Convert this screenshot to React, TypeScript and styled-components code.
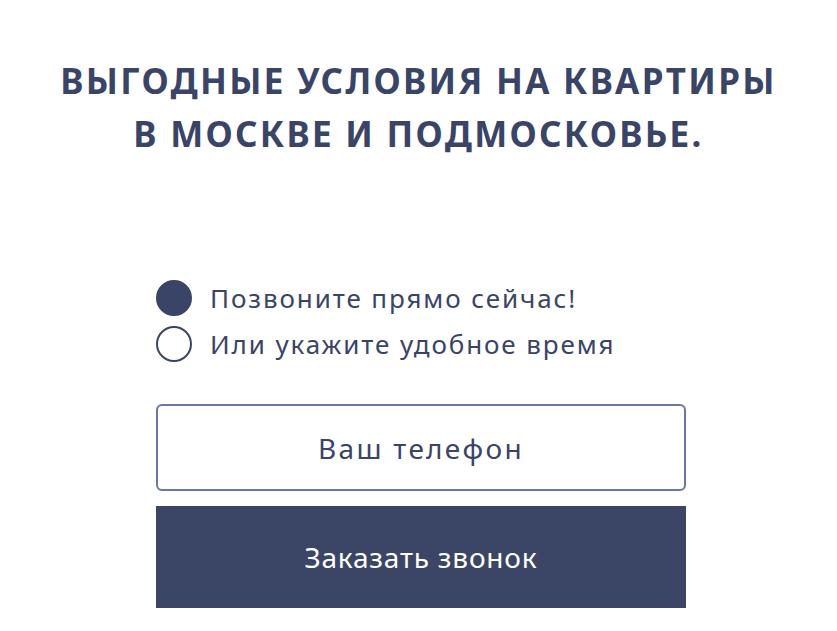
import React, { useState } from "react";
import styled, { createGlobalStyle } from "styled-components";

const Global = createGlobalStyle`
  html, body { margin: 0; padding: 0; background: #ffffff; }
  body { font-family: "Noto Sans", "DejaVu Sans", sans-serif; color: #3a4466; }
`;

const Page = styled.div`
  width: 837px;
  height: 631px;
  background: #fff;
  display: flex;
  flex-direction: column;
  align-items: center;
  padding-top: 54px;
  box-sizing: border-box;
`;

const Title = styled.h1`
  margin: 0;
  font-family: "Noto Sans", sans-serif;
  font-weight: 700;
  font-size: 35px;
  line-height: 53px;
  letter-spacing: 2.3px;
  text-align: center;
  color: #3a4466;
  text-transform: uppercase;
`;

const Form = styled.form`
  margin-top: 120px;
  width: 530px;
  margin-left: 5px;
  display: flex;
  flex-direction: column;
`;

const Options = styled.div`
  display: flex;
  flex-direction: column;
  gap: 10px;
`;

const Option = styled.label`
  display: flex;
  align-items: center;
  gap: 18px;
  cursor: pointer;
  height: 36px;
`;

const Dot = styled.span<{ $on: boolean }>`
  width: 36px;
  height: 36px;
  border-radius: 50%;
  box-sizing: border-box;
  border: 2px solid #3a4466;
  background: ${(p) => (p.$on ? "#3a4466" : "#fff")};
  flex-shrink: 0;
`;

const OptionText = styled.span`
  font-family: "Noto Sans", sans-serif;
  font-size: 26px;
  line-height: 36px;
  letter-spacing: 1.9px;
  color: #3a4466;
`;

const PhoneInput = styled.input`
  margin-top: 42px;
  height: 87px;
  box-sizing: border-box;
  border: 2px solid #6a77a3;
  border-radius: 6px;
  text-align: center;
  font-family: "Noto Sans", sans-serif;
  font-size: 28px;
  letter-spacing: 2.3px;
  color: #3a4466;
  outline: none;
  &::placeholder { color: #3a4466; opacity: 1; }
`;

const Submit = styled.button`
  margin-top: 15px;
  height: 102px;
  border: 0;
  background: #3b4566;
  color: #fff;
  font-family: "Noto Sans", sans-serif;
  font-size: 28px;
  letter-spacing: 0.8px;
  cursor: pointer;
`;

export default function App() {
  const [choice, setChoice] = useState(0);
  const options = ["Позвоните прямо сейчас!", "Или укажите удобное время"];
  return (
    <Page>
      <Global />
      <Title>
        Выгодные условия на квартиры
        <br />в Москве и Подмосковье.
      </Title>
      <Form onSubmit={(e) => e.preventDefault()}>
        <Options>
          {options.map((o, i) => (
            <Option key={o} onClick={() => setChoice(i)}>
              <Dot $on={choice === i} />
              <OptionText>{o}</OptionText>
            </Option>
          ))}
        </Options>
        <PhoneInput placeholder="Ваш телефон" />
        <Submit type="submit">Заказать звонок</Submit>
      </Form>
    </Page>
  );
}
